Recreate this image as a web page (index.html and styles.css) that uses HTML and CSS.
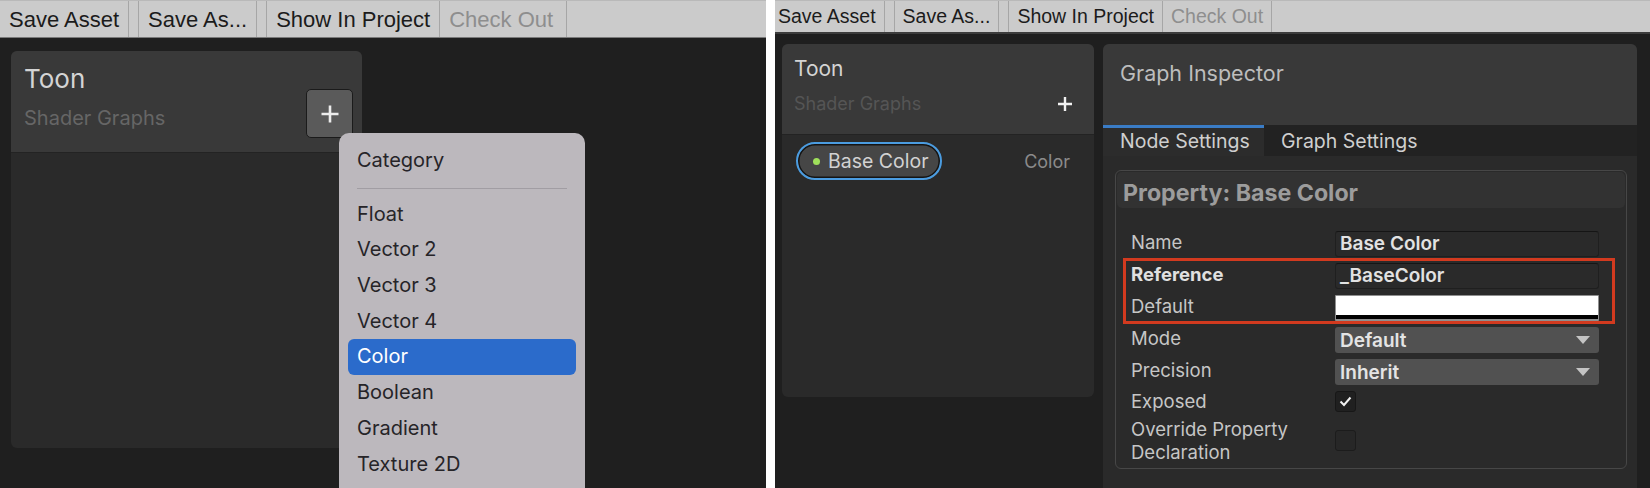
FILE: index.html
```html
<!DOCTYPE html>
<html>
<head>
<meta charset="utf-8">
<link rel="stylesheet" href="styles.css">
</head>
<body>
<div class="shot shot-a">
  <div class="toolbar toolbar-a">
    <span class="tb-btn">Save Asset</span><span class="tb-gap"></span><span class="tb-btn">Save As...</span><span class="tb-gap"></span><span class="tb-btn">Show In Project</span><span class="tb-btn disabled last">Check Out</span>
  </div>
  <div class="canvas canvas-a">
    <div class="bb-panel bb-a">
      <div class="bb-head">
        <div class="bb-titles">
          <div class="bb-title">Toon</div>
          <div class="bb-sub">Shader Graphs</div>
        </div>
        <div class="add-btn">
          <svg width="20" height="20" viewBox="0 0 20 20"><path d="M10 1.5V18.5M1.5 10H18.5" stroke="#ececec" stroke-width="2.6" fill="none"/></svg>
        </div>
      </div>
      <div class="bb-body"></div>
    </div>
  </div>
  <div class="menu">
    <div class="menu-item menu-cat">Category</div>
    <div class="menu-sep"></div>
    <div class="menu-item">Float</div>
    <div class="menu-item">Vector 2</div>
    <div class="menu-item">Vector 3</div>
    <div class="menu-item">Vector 4</div>
    <div class="menu-item selected">Color</div>
    <div class="menu-item">Boolean</div>
    <div class="menu-item">Gradient</div>
    <div class="menu-item">Texture 2D</div>
  </div>
</div>

<div class="shot shot-b">
  <div class="toolbar toolbar-b">
    <span class="tb-btn first">Save Asset</span><span class="tb-gap"></span><span class="tb-btn">Save As...</span><span class="tb-gap"></span><span class="tb-btn">Show In Project</span><span class="tb-btn disabled">Check Out</span>
  </div>
  <div class="canvas canvas-b">
    <div class="bb-panel bb-b">
      <div class="bb-head">
        <div class="bb-titles">
          <div class="bb-title">Toon</div>
          <div class="bb-sub">Shader Graphs</div>
        </div>
        <div class="add-plain">
          <svg width="16" height="16" viewBox="0 0 16 16"><path d="M8 1V15M1 8H15" stroke="#f2f2f2" stroke-width="2.4" fill="none"/></svg>
        </div>
      </div>
      <div class="bb-body">
        <div class="bb-row">
          <div class="pill"><span class="pill-dot"></span><span class="pill-text">Base Color</span></div>
          <span class="bb-type">Color</span>
        </div>
      </div>
    </div>

    <div class="inspector">
      <div class="insp-head">Graph Inspector</div>
      <div class="tabs">
        <div class="tab active">Node Settings</div>
        <div class="tab">Graph Settings</div>
      </div>
      <div class="insp-body">
        <div class="prop-box">
          <div class="prop-head">Property: Base Color</div>
          <div class="prop-grid">
            <div class="lbl">Name</div>
            <div class="field text-field">Base Color</div>
            <div class="lbl strong">Reference</div>
            <div class="field text-field">_BaseColor</div>
            <div class="lbl">Default</div>
            <div class="field swatch"></div>
            <div class="lbl">Mode</div>
            <div class="field dropdown"><span>Default</span><svg width="14" height="8" viewBox="0 0 14 8"><path d="M0 0H14L7 8Z" fill="#c4c4c4"/></svg></div>
            <div class="lbl">Precision</div>
            <div class="field dropdown"><span>Inherit</span><svg width="14" height="8" viewBox="0 0 14 8"><path d="M0 0H14L7 8Z" fill="#c4c4c4"/></svg></div>
            <div class="lbl cb-lbl">Exposed</div>
            <div class="cell"><div class="checkbox"><svg width="19" height="19" viewBox="0 0 19 19"><path d="M4.5 9.5L8 13L14.5 5.5" stroke="#f0f0f0" stroke-width="2" fill="none"/></svg></div></div>
            <div class="lbl two">Override Property Declaration</div>
            <div class="cell"><div class="checkbox empty"></div></div>
          </div>
          <div class="annot"></div>
        </div>
      </div>
    </div>
  </div>
</div>
</body>
</html>
```

FILE: styles.css
```css
* { box-sizing: border-box; margin: 0; padding: 0; }
html, body { width: 1650px; height: 488px; overflow: hidden; }
body {
  background: #ffffff;
  display: flex;
  gap: 9px;
  font-family: "Inter", "Liberation Sans", sans-serif;
}
.shot {
  position: relative;
  display: flex;
  flex-direction: column;
  background: #1f1f1f;
  overflow: hidden;
  height: 488px;
}
.shot-a { width: 766px; flex: none; }
.shot-b { flex: 1; }

/* toolbars */
.toolbar {
  display: flex;
  flex: none;
  background: #cbcbcb;
  font-family: "Liberation Sans", Arial, sans-serif;
  color: #1b1b1b;
  border-top: 1px solid #b9b9b9;
}
.toolbar-a { height: 38px; font-size: 22px; border-bottom: 1px solid #7a7a7a; }
.toolbar-a .tb-btn { line-height: 36px; padding: 1px 9px 0; }
.toolbar-a .tb-btn.last { padding-right: 13px; }
.toolbar-b { height: 34px; font-size: 19.5px; border-bottom: 2px solid #3c3c3c; }
.toolbar-b .tb-btn { line-height: 31px; padding: 0 8px; }
.toolbar-b .tb-btn.first { padding-left: 3px; }
.tb-btn { border-right: 1px solid #a6a6a6; white-space: nowrap; }
.tb-btn.disabled { color: #8e8e8e; }
.tb-gap { width: 10px; border-right: 1px solid #a6a6a6; }

/* canvases */
.canvas { flex: 1; display: flex; align-items: flex-start; }
.canvas-a { padding: 13px 0 0 11px; }
.canvas-b { padding: 10px 13px 0 7px; gap: 9px; }

/* blackboard panel */
.bb-panel {
  flex: none;
  display: flex;
  flex-direction: column;
  background: #2a2a2a;
  border-radius: 6px;
  overflow: hidden;
}
.bb-head {
  flex: none;
  display: flex;
  background: #393939;
  border-bottom: 1px solid #232323;
}
.bb-titles { flex: 1; }
.bb-title { color: #d4d4d4; }
.bb-sub { color: #666666; }

.bb-a { width: 351px; height: 397px; }
.bb-a .bb-head { height: 102px; padding: 12px 9px 0 13px; }
.bb-a .bb-title { font-size: 26px; line-height: 32px; }
.bb-a .bb-sub { font-size: 20px; line-height: 24px; margin-top: 11px; }
.add-btn {
  align-self: flex-start;
  margin-top: 26px;
  width: 47px;
  height: 49px;
  background: #5a5a5a;
  border: 1px solid #1b1b1b;
  border-radius: 5px;
  display: flex;
  align-items: center;
  justify-content: center;
}

.bb-b { width: 312px; height: 353px; }
.bb-b .bb-head { height: 91px; padding: 12px 21px 0 12px; }
.bb-b .bb-title { font-size: 21px; line-height: 26px; }
.bb-b .bb-sub { font-size: 18px; line-height: 22px; margin-top: 11px; color: #555555; }
.add-plain { margin-top: 40px; width: 16px; height: 16px; }
.add-plain svg { display: block; }

.bb-body { flex: 1; }
.bb-row {
  display: flex;
  align-items: center;
  justify-content: space-between;
  padding: 7px 24px 0 14px;
}
.pill {
  display: flex;
  align-items: center;
  gap: 8px;
  height: 38px;
  padding: 0 11px 0 15px;
  border: 2px solid #4b9ce0;
  border-radius: 19px;
  background: #464646;
  box-shadow: inset 0 0 0 1.5px #141414;
}
.pill-dot { width: 7px; height: 7px; border-radius: 50%; background: #9fe05b; }
.pill-text { font-size: 19.5px; color: #d2d2d2; }
.bb-type { font-size: 18px; color: #8b8b8b; }

/* popup menu */
.menu {
  position: absolute;
  left: 339px;
  top: 133px;
  width: 246px;
  height: 380px;
  background: #bcb8bd;
  border-radius: 10px;
  padding-top: 10px;
  font-size: 20px;
  color: #262428;
}
.menu-item {
  margin: 0 9px;
  padding-left: 9px;
  line-height: 35.7px;
  height: 35.7px;
  border-radius: 6px;
}
.menu-item.selected { background: #2b6bcb; color: #ffffff; }
.menu-sep { height: 1px; margin: 9px 18px 8px; background: #a19da3; }

/* inspector */
.inspector {
  flex: none;
  width: 534px;
  height: 470px;
  background: #2a2a2a;
  border-radius: 6px 6px 0 0;
  overflow: hidden;
}
.insp-head {
  height: 81px;
  background: #393939;
  padding: 16px 0 0 17px;
  font-size: 21.5px;
  line-height: 26px;
  color: #bdbdbd;
}
.tabs { display: flex; height: 31px; background: #222222; }
.tab {
  padding: 0 16px 0 17px;
  border-top: 3px solid transparent;
  font-size: 19.5px;
  line-height: 27px;
  color: #cfcfcf;
  white-space: nowrap;
}
.tab.active { background: #2c2c2c; border-top-color: #3a7cc6; width: 161px; }
.insp-body { padding: 14px 10px 0 12px; }
.prop-box {
  position: relative;
  height: 299px;
  border: 1px solid #474747;
  border-radius: 6px;
}
.prop-head {
  height: 36px;
  margin: 1px;
  background: #323232;
  border-radius: 5px;
  padding: 7px 0 0 6px;
  font-size: 23.2px;
  line-height: 28px;
  font-weight: 700;
  color: #9c9c9c;
}
.prop-grid {
  display: grid;
  grid-template-columns: 204px 1fr;
  grid-template-rows: 26px 26px 26px 26px 26px 21px auto;
  row-gap: 6px;
  padding: 22px 27px 0 15px;
}
.lbl {
  font-size: 18.5px;
  line-height: 22px;
  color: #c6c6c6;
  align-self: center;
  padding-bottom: 5px;
}
.lbl.cb-lbl { padding-bottom: 1px; }
.lbl.strong { font-weight: 700; color: #e0e0e0; }
.lbl.two { line-height: 22.6px; padding-bottom: 0; }
.field { height: 26px; border-radius: 3px; }
.text-field {
  background: #2a2a2a;
  border: 1px solid #1f1f1f;
  border-top-color: #151515;
  padding-left: 4px;
  font-size: 19px;
  font-weight: 600;
  line-height: 24px;
  color: #e2e2e2;
}
.swatch {
  background: #ffffff;
  border: 1px solid #8f8f8f;
  border-bottom-width: 2px;
  border-radius: 1px;
  box-shadow: inset 0 -4px 0 #000000;
}
.dropdown {
  display: flex;
  align-items: center;
  justify-content: space-between;
  background: #515151;
  padding: 0 9px 0 5px;
  font-size: 19px;
  font-weight: 600;
  color: #e4e4e4;
}
.cell { display: flex; align-items: center; }
.checkbox {
  width: 21px;
  height: 21px;
  background: #202020;
  border: 1px solid #171717;
  border-radius: 3px;
  display: flex;
  align-items: center;
  justify-content: center;
}
.checkbox.empty { background: #272727; border-color: #1c1c1c; }
.annot {
  position: absolute;
  left: 7px;
  top: 87px;
  width: 492px;
  height: 66px;
  border: 3px solid #d23a1f;
}
```
